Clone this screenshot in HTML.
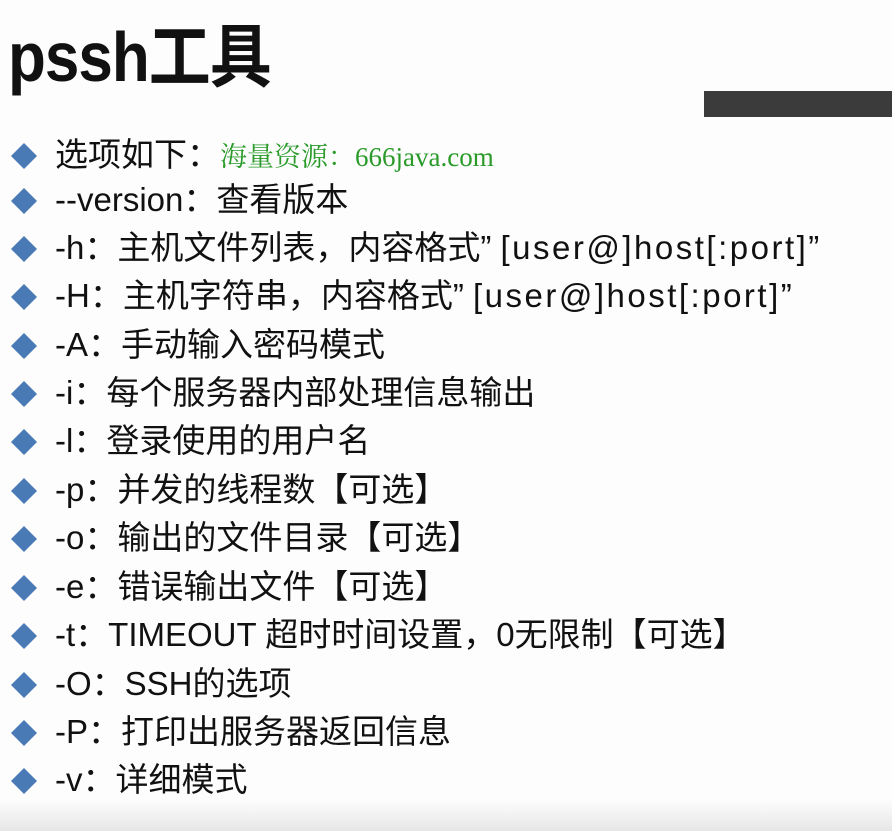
<!DOCTYPE html>
<html><head><meta charset="utf-8"><style>
body{margin:0;width:892px;height:831px;background:#fcfdfc;position:relative;overflow:hidden;font-family:"Liberation Sans","Noto Sans CJK SC",sans-serif;color:#111}
.t{position:absolute;left:8px;top:14px;font-size:62px;font-weight:bold;letter-spacing:-1px;line-height:80px;transform:scaleY(1.12);transform-origin:left top}
.bar{position:absolute;left:704px;top:91px;width:188px;height:26px;background:#3b3b3b}
.l{position:absolute;left:55px;font-size:33px;line-height:36px;white-space:nowrap}
.d{position:absolute;left:11px;width:26px;height:26px}
.g{color:#2a9a2a;font-family:"Liberation Serif","Noto Serif CJK SC",serif;font-size:27px}
.s{letter-spacing:2.5px}
.bot{position:absolute;left:0;top:800px;width:892px;height:31px;background:linear-gradient(#fcfdfc,#e6e6e6)}
</style></head><body>
<div class="t">pssh工具</div>
<div class="bar"></div>
<svg width="0" height="0" style="position:absolute"><defs><polygon id="dm" points="13,0 26,13 13,26 0,13" fill="#4a7ab5"/></defs></svg>
<svg class="d" viewBox="0 0 26 26" style="top:143px"><use href="#dm"/></svg><div class="l" style="top:137px">选项如下：<span class="g">海量资源：666java.com</span></div>
<svg class="d" viewBox="0 0 26 26" style="top:188px"><use href="#dm"/></svg><div class="l" style="top:182px">--version：查看版本</div>
<svg class="d" viewBox="0 0 26 26" style="top:236px"><use href="#dm"/></svg><div class="l" style="top:230px">-h：主机文件列表，内容格式” <span class="s">[user@]host[:port]”</span></div>
<svg class="d" viewBox="0 0 26 26" style="top:284px"><use href="#dm"/></svg><div class="l" style="top:278px">-H：主机字符串，内容格式” <span class="s">[user@]host[:port]”</span></div>
<svg class="d" viewBox="0 0 26 26" style="top:333px"><use href="#dm"/></svg><div class="l" style="top:327px">-A：手动输入密码模式</div>
<svg class="d" viewBox="0 0 26 26" style="top:381px"><use href="#dm"/></svg><div class="l" style="top:375px">-i：每个服务器内部处理信息输出</div>
<svg class="d" viewBox="0 0 26 26" style="top:429px"><use href="#dm"/></svg><div class="l" style="top:423px">-l：登录使用的用户名</div>
<svg class="d" viewBox="0 0 26 26" style="top:478px"><use href="#dm"/></svg><div class="l" style="top:472px">-p：并发的线程数【可选】</div>
<svg class="d" viewBox="0 0 26 26" style="top:526px"><use href="#dm"/></svg><div class="l" style="top:520px">-o：输出的文件目录【可选】</div>
<svg class="d" viewBox="0 0 26 26" style="top:575px"><use href="#dm"/></svg><div class="l" style="top:569px">-e：错误输出文件【可选】</div>
<svg class="d" viewBox="0 0 26 26" style="top:623px"><use href="#dm"/></svg><div class="l" style="top:617px">-t：TIMEOUT 超时时间设置，0无限制【可选】</div>
<svg class="d" viewBox="0 0 26 26" style="top:672px"><use href="#dm"/></svg><div class="l" style="top:666px">-O：SSH的选项</div>
<svg class="d" viewBox="0 0 26 26" style="top:720px"><use href="#dm"/></svg><div class="l" style="top:714px">-P：打印出服务器返回信息</div>
<svg class="d" viewBox="0 0 26 26" style="top:768px"><use href="#dm"/></svg><div class="l" style="top:762px">-v：详细模式</div>
<div class="bot"></div>
</body></html>
